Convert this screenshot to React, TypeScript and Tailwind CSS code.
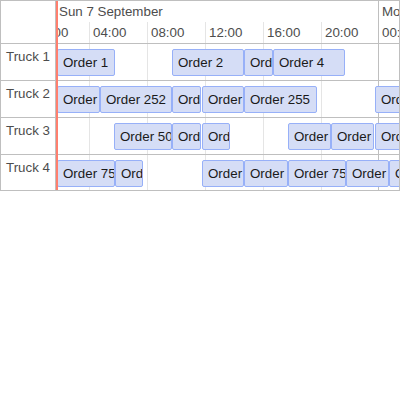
import React from "react";

type Item = { s: number; e: number; t: string };

const rows: { label: string; h: string; border: boolean; items: Item[] }[] = [
  {
    label: "Truck 1",
    h: "h-[37px]",
    border: true,
    items: [
      { s: 57, e: 114, t: "Order 1" },
      { s: 172, e: 243, t: "Order 2" },
      { s: 244, e: 272, t: "Order 3" },
      { s: 273, e: 344, t: "Order 4" },
    ],
  },
  {
    label: "Truck 2",
    h: "h-[37px]",
    border: true,
    items: [
      { s: 57, e: 99, t: "Order 251" },
      { s: 100, e: 171, t: "Order 252" },
      { s: 172, e: 200, t: "Order 253" },
      { s: 202, e: 243, t: "Order 254" },
      { s: 244, e: 316, t: "Order 255" },
      { s: 375, e: 430, t: "Order 256" },
    ],
  },
  {
    label: "Truck 3",
    h: "h-[37px]",
    border: true,
    items: [
      { s: 114, e: 171, t: "Order 501" },
      { s: 172, e: 200, t: "Order 502" },
      { s: 202, e: 229, t: "Order 503" },
      { s: 288, e: 330, t: "Order 504" },
      { s: 331, e: 373, t: "Order 505" },
      { s: 375, e: 430, t: "Order 506" },
    ],
  },
  {
    label: "Truck 4",
    h: "h-[35px]",
    border: false,
    items: [
      { s: 57, e: 114, t: "Order 751" },
      { s: 115, e: 142, t: "Order 752" },
      { s: 202, e: 243, t: "Order 753" },
      { s: 244, e: 287, t: "Order 754" },
      { s: 288, e: 345, t: "Order 755" },
      { s: 346, e: 388, t: "Order 756" },
      { s: 389, e: 440, t: "Order 757" },
    ],
  },
];

const minor = [
  { x: -25, t: "00:00" },
  { x: 33, t: "04:00" },
  { x: 91, t: "08:00" },
  { x: 149, t: "12:00" },
  { x: 207, t: "16:00" },
  { x: 265, t: "20:00" },
];

export default function App() {
  return (
    <div className="w-[400px] h-[400px] bg-white">
      <div className="w-[400px] border border-[#bfbfbf] flex font-['Liberation_Sans',Arial,sans-serif] text-[13.33px] leading-[15px] text-[#4d4d4d] overflow-hidden">
        {/* left panel */}
        <div className="w-[55px] shrink-0 border-r border-[#bfbfbf] flex flex-col">
          <div className="h-[43px] border-b border-[#bfbfbf]" />
          {rows.map((r) => (
            <div
              key={r.label}
              className={`${r.h} ${r.border ? "border-b border-[#bfbfbf]" : ""} pl-[5px] pt-[5px] whitespace-nowrap`}
            >
              {r.label}
            </div>
          ))}
        </div>

        {/* timeline */}
        <div className="flex-1 relative overflow-hidden flex flex-col">
          {/* grid lines */}
          {minor.map((m) => (
            <div
              key={m.t}
              className="absolute top-[21px] bottom-0 w-px bg-[#e5e5e5]"
              style={{ left: m.x }}
            />
          ))}
          <div className="absolute top-0 bottom-0 left-[322px] w-px bg-[#bfbfbf]" />

          {/* header */}
          <div className="h-[43px] border-b border-[#bfbfbf] relative shrink-0">
            <div className="absolute left-[3px] top-[3px] whitespace-nowrap">Sun 7 September</div>
            <div className="absolute left-[326px] top-[3px] whitespace-nowrap">Mon 8 September</div>
            {minor.map((m) => (
              <div
                key={m.t}
                className="absolute top-[24px] whitespace-nowrap"
                style={{ left: m.x + 4 }}
              >
                {m.t}
              </div>
            ))}
            <div className="absolute top-[24px] left-[326px] whitespace-nowrap">00:00</div>
          </div>

          {rows.map((r) => (
            <div
              key={r.label}
              className={`${r.h} ${r.border ? "border-b border-[#bfbfbf]" : ""} relative shrink-0`}
            >
              {r.items.map((it) => (
                <div
                  key={it.t}
                  className="absolute top-[5px] h-[27px] border border-[#97b0f8] bg-[#d5ddf6] rounded-[2px] overflow-hidden whitespace-nowrap text-[#1a1a1a] px-[5px] py-[5px] box-border"
                  style={{ left: it.s - 56, width: it.e - it.s + 1 }}
                >
                  {it.t}
                </div>
              ))}
            </div>
          ))}

          {/* current time */}
          <div className="absolute top-0 bottom-0 left-0 w-[2px] bg-[#ff7f6e] z-10" />
        </div>
      </div>
    </div>
  );
}
